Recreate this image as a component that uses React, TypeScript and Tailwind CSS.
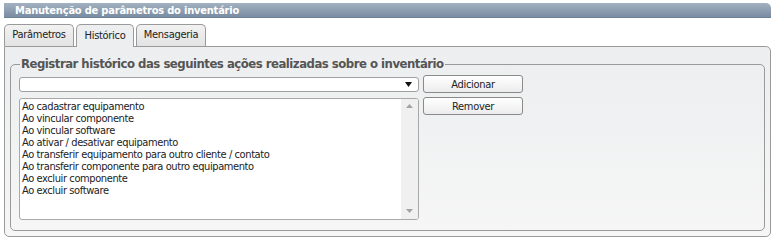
import React from "react";

const items = [
  "Ao cadastrar equipamento",
  "Ao vincular componente",
  "Ao vincular software",
  "Ao ativar / desativar equipamento",
  "Ao transferir equipamento para outro cliente / contato",
  "Ao transferir componente para outro equipamento",
  "Ao excluir componente",
  "Ao excluir software",
];

const font = { fontFamily: "'DejaVu Sans Condensed', 'DejaVu Sans', sans-serif" };

export default function App() {
  return (
    <div className="w-[775px] h-[239px] bg-white pt-[3px] px-[4px] text-[#222]" style={font}>
      <div className="h-[15px] rounded-tr-[5px] bg-gradient-to-b from-[#a3b2c2] to-[#7a8ca1] border-b border-[#6f8296] pl-[11px] flex items-center">
        <span className="text-white font-bold text-[11px] leading-none tracking-[-0.2px]">Manutenção de parâmetros do inventário</span>
      </div>
      <div className="flex gap-[2px] mt-[5px] h-[23px] items-end">
        <div className="h-[22px] w-[70px] rounded-t-[5px] border border-b-0 border-[#9a9a9a] bg-gradient-to-b from-[#f2f2f2] to-[#e3e3e3] flex items-center justify-center text-[11px] tracking-[-0.3px]">Parâmetros</div>
        <div className="h-[23px] w-[58px] rounded-t-[5px] border border-b-0 border-[#9a9a9a] bg-[#eceeef] flex items-center justify-center text-[11px] tracking-[-0.3px] relative top-[1px] z-10">Histórico</div>
        <div className="h-[22px] w-[70px] rounded-t-[5px] border border-b-0 border-[#9a9a9a] bg-gradient-to-b from-[#f2f2f2] to-[#e3e3e3] flex items-center justify-center text-[11px] tracking-[-0.3px]">Mensageria</div>
      </div>
      <div className="h-[191px] border border-[#9a9a9a] rounded-b-[5px] rounded-tr-[5px] bg-gradient-to-b from-[#eceeef] to-[#f6f6f6] px-[5px] pt-[9px]">
        <fieldset className="h-[175px] border border-[#999] rounded-[5px] px-[8px] pb-[8px]">
          <legend className="text-[13px] font-bold text-[#555] px-[1px] ml-[1px] tracking-[-0.5px] leading-[16px]">Registrar histórico das seguintes ações realizadas sobre o inventário</legend>
          <div className="flex gap-[4px] mt-[3px]">
            <div className="flex flex-col gap-[6px] w-[400px] pt-[2px]">
              <div className="h-[15px] bg-white border border-[#a0a0a0] rounded-[3px] flex items-center justify-end pr-[6px]">
                <svg width="7" height="5" viewBox="0 0 7 5"><path d="M0 0H7L3.5 5Z" fill="#111" /></svg>
              </div>
              <div className="h-[122px] bg-white border border-[#a8a8a8] rounded-[3px] flex overflow-hidden">
                <div className="flex-1 pl-[2px] pt-[2px] text-[11px] leading-[12px] tracking-[-0.4px] text-[#222]">
                  {items.map((t) => (
                    <div key={t}>{t}</div>
                  ))}
                </div>
                <div className="w-[17px] bg-[#f0f0f0] flex flex-col justify-between items-center pt-[5px] pb-[6px]">
                  <svg width="7" height="4" viewBox="0 0 7 4"><path d="M0 4H7L3.5 0Z" fill="#a3a3a3" /></svg>
                  <svg width="7" height="4" viewBox="0 0 7 4"><path d="M0 0H7L3.5 4Z" fill="#a3a3a3" /></svg>
                </div>
              </div>
            </div>
            <div className="flex flex-col gap-[4px]">
              <button className="h-[18px] w-[100px] border border-[#8a8a8a] rounded-[3px] bg-gradient-to-b from-white to-[#ececec] text-[11px] leading-none text-[#222] tracking-[-0.3px]">Adicionar</button>
              <button className="h-[18px] w-[100px] border border-[#8a8a8a] rounded-[3px] bg-gradient-to-b from-white to-[#ececec] text-[11px] leading-none text-[#222] tracking-[-0.3px]">Remover</button>
            </div>
          </div>
        </fieldset>
      </div>
    </div>
  );
}
